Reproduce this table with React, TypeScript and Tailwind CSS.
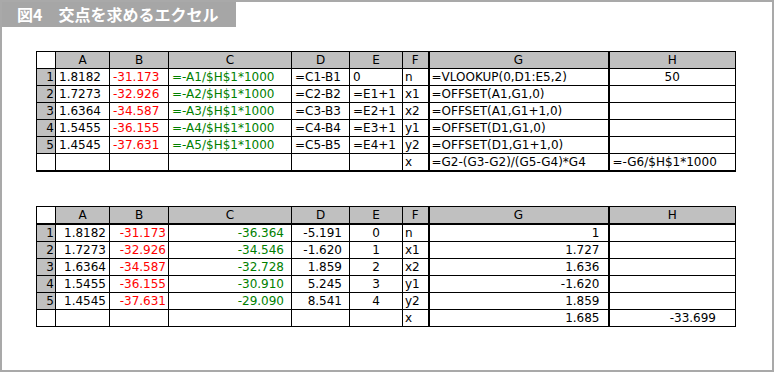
import React from "react"

type Cell = { v: string; cls?: string }

const widths = [19, 54, 59, 123, 58, 53, 26, 180, 127]
const heads = ["", "A", "B", "C", "D", "E", "F", "G", "H"]

const topRows: string[][] = [
  ["1.8182", "-31.173", "=-A1/$H$1*1000", "=C1-B1", "0", "n", "=VLOOKUP(0,D1:E5,2)", "50"],
  ["1.7273", "-32.926", "=-A2/$H$1*1000", "=C2-B2", "=E1+1", "x1", "=OFFSET(A1,G1,0)", ""],
  ["1.6364", "-34.587", "=-A3/$H$1*1000", "=C3-B3", "=E2+1", "x2", "=OFFSET(A1,G1+1,0)", ""],
  ["1.5455", "-36.155", "=-A4/$H$1*1000", "=C4-B4", "=E3+1", "y1", "=OFFSET(D1,G1,0)", ""],
  ["1.4545", "-37.631", "=-A5/$H$1*1000", "=C5-B5", "=E4+1", "y2", "=OFFSET(D1,G1+1,0)", ""],
  ["", "", "", "", "", "x", "=G2-(G3-G2)/(G5-G4)*G4", "=-G6/$H$1*1000"],
]

const bottomRows: string[][] = [
  ["1.8182", "-31.173", "-36.364", "-5.191", "0", "n", "1", ""],
  ["1.7273", "-32.926", "-34.546", "-1.620", "1", "x1", "1.727", ""],
  ["1.6364", "-34.587", "-32.728", "1.859", "2", "x2", "1.636", ""],
  ["1.5455", "-36.155", "-30.910", "5.245", "3", "y1", "-1.620", ""],
  ["1.4545", "-37.631", "-29.090", "8.541", "4", "y2", "1.859", ""],
  ["", "", "", "", "", "x", "1.685", "-33.699"],
]

// per-column text style for each sheet
const topCols = [
  "text-left pl-[3px]",
  "text-left pl-[3px] text-[#ff0000]",
  "text-left pl-[3px] text-[#008000]",
  "text-left pl-[3px]",
  "text-left pl-[3px]",
  "text-left pl-[2px]",
  "text-left pl-[2px]",
  "text-left pl-[3px]",
]

const bottomCols = [
  "text-right pr-[3px]",
  "text-right pr-[2px] text-[#ff0000]",
  "text-right pr-[7px] text-[#008000]",
  "text-right pr-[7px]",
  "text-center",
  "text-left pl-[2px]",
  "text-right pr-[8px]",
  "text-right pr-[19px]",
]

function colBorder(i: number) {
  // thick rule after F and after G
  if (i === 5 || i === 6) return "border-r-2"
  return ""
}

function Sheet({ rows, cols, top }: { rows: string[][]; cols: string[]; top: boolean }) {
  return (
    <table className="table-fixed border-collapse w-[700px] text-[12px] leading-[16px] text-black">
      <colgroup>
        {widths.map((w, i) => (
          <col key={i} style={{ width: w }} />
        ))}
      </colgroup>
      <thead>
        <tr className="h-[17px]">
          {heads.map((h, i) => (
            <th
              key={i}
              className={`border border-black p-0 font-normal text-center ${i === 0 ? "bg-white" : "bg-[#c0c0c0]"} ${
                i >= 6 ? "" : ""
              } ${!top ? "border-b-2" : ""} ${i === 6 || i === 7 ? "border-r-2" : ""}`}
            >
              {h}
            </th>
          ))}
        </tr>
      </thead>
      <tbody>
        {rows.map((r, ri) => {
          const last = ri === rows.length - 1
          return (
            <tr key={ri} className="h-[17px]">
              <td
                className={`border border-black p-0 pr-[1px] text-right ${last ? "bg-white" : "bg-[#c0c0c0]"} ${
                  last && top ? "border-b-2" : ""
                }`}
              >
                {last ? "" : ri + 1}
              </td>
              {r.map((c, ci) => {
                let cls = cols[ci]
                if (top && ci === 7 && ri === 0) cls = "text-center"
                return (
                  <td
                    key={ci}
                    className={`border border-black p-0 whitespace-nowrap overflow-hidden ${cls} ${colBorder(ci)} ${
                      last && top ? "border-b-2" : ""
                    }`}
                  >
                    {c}
                  </td>
                )
              })}
            </tr>
          )
        })}
      </tbody>
    </table>
  )
}

export default function App() {
  return (
    <div
      className="w-[774px] h-[372px] border-2 border-[#a9a9a9] bg-white overflow-hidden"
      style={{ fontFamily: '"DejaVu Sans", "Noto Sans CJK JP", sans-serif' }}
    >
      <div className="-mt-[2px] -ml-[2px] w-[236px] h-[27px] bg-[#a6a6a6] flex items-center pl-[17px]">
        <span
          className="text-white text-[16px] font-bold leading-none tracking-[0px]"
          style={{ fontFamily: '"Noto Sans CJK JP", sans-serif' }}
        >
          図4　交点を求めるエクセル
        </span>
      </div>
      <div className="ml-[34px] mt-[24px] flex flex-col gap-[34px]">
        <Sheet rows={topRows} cols={topCols} top={true} />
        <Sheet rows={bottomRows} cols={bottomCols} top={false} />
      </div>
    </div>
  )
}
